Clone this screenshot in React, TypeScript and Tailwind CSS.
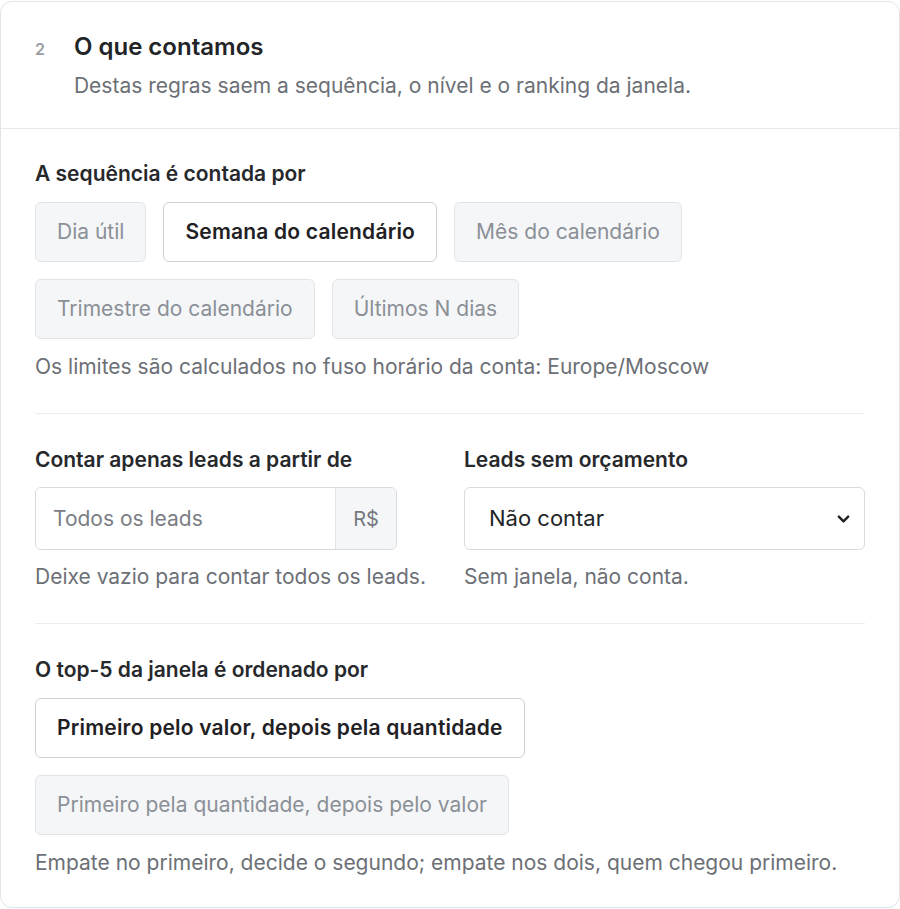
import { useState } from "react";

type Option = { id: string; label: string };

const periodOptions: Option[] = [
  { id: "workday", label: "Dia útil" },
  { id: "week", label: "Semana do calendário" },
  { id: "month", label: "Mês do calendário" },
  { id: "quarter", label: "Trimestre do calendário" },
  { id: "lastN", label: "Últimos N dias" },
];

const rankingOptions: Option[] = [
  { id: "value", label: "Primeiro pelo valor, depois pela quantidade" },
  { id: "count", label: "Primeiro pela quantidade, depois pelo valor" },
];

function Choice({ label, active, onClick }: { label: string; active: boolean; onClick: () => void }) {
  return (
    <button
      type="button"
      onClick={onClick}
      className={
        active
          ? "h-[60px] rounded-md border border-[#cfd3d8] bg-white px-[21px] text-[21px] font-semibold tracking-[0.2px] text-[#1f2124]"
          : "h-[60px] rounded-md border border-[#e1e4e8] bg-[#f5f6f8] px-[21px] text-[21px] text-[#8b9097]"
      }
    >
      {label}
    </button>
  );
}

function Label({ children }: { children: React.ReactNode }) {
  return <div className="text-[21px] leading-[26px] font-semibold text-[#26282b]">{children}</div>;
}

function Hint({ children }: { children: React.ReactNode }) {
  return <p className="text-[21px] leading-[28px] text-[#6c7076]">{children}</p>;
}

export default function App() {
  const [period, setPeriod] = useState("week");
  const [ranking, setRanking] = useState("value");

  return (
    <div className="min-h-screen bg-white pt-px font-['Inter',sans-serif]">
      <section className="rounded-xl border border-[#e2e4e7] bg-white">
        <header className="flex gap-[29px] border-b border-[#e8eaed] px-[34px] pt-[29px] pb-[28px]">
          <span className="pt-[8px] text-[16px] font-semibold leading-[20px] text-[#9a9ea4]">2</span>
          <div className="flex flex-col gap-[9px]">
            <h2 className="text-[24px] leading-[32px] font-semibold text-[#222427]">O que contamos</h2>
            <p className="text-[21px] leading-[28px] text-[#6c7076]">
              Destas regras saem a sequência, o nível e o ranking da janela.
            </p>
          </div>
        </header>

        <div className="px-[34px] pt-[32px] pb-[30px]">
          <Label>A sequência é contada por</Label>
          <div className="mt-[15px] flex max-w-[700px] flex-wrap gap-[17px]">
            {periodOptions.map((o) => (
              <Choice key={o.id} label={o.label} active={period === o.id} onClick={() => setPeriod(o.id)} />
            ))}
          </div>
          <div className="mt-[14px]">
            <Hint>Os limites são calculados no fuso horário da conta: Europe/Moscow</Hint>
          </div>

          <div className="mt-[32px] mb-[33px] border-t border-[#ebedf0]" />

          <div className="grid grid-cols-2 gap-[28px]">
            <div>
              <Label>Contar apenas leads a partir de</Label>
              <div className="mt-[14px] flex h-[63px] w-[362px] overflow-hidden rounded-md border border-[#d7dade]">
                <input
                  placeholder="Todos os leads"
                  className="min-w-0 flex-1 bg-white px-[17px] text-[21px] text-[#222] outline-none placeholder:text-[#7a7e84]"
                />
                <span className="flex w-[61px] items-center justify-center border-l border-[#e1e4e8] bg-[#f5f6f8] text-[20px] text-[#75797f]">
                  R$
                </span>
              </div>
              <div className="mt-[13px]">
                <Hint>Deixe vazio para contar todos os leads.</Hint>
              </div>
            </div>
            <div>
              <Label>Leads sem orçamento</Label>
              <div className="relative mt-[14px] h-[63px]">
                <select className="h-full w-full appearance-none rounded-md border border-[#d7dade] bg-white pl-[24px] text-[22px] text-[#222427] outline-none">
                  <option>Não contar</option>
                  <option>Contar</option>
                </select>
                <svg
                  className="pointer-events-none absolute top-1/2 right-[14px] -translate-y-1/2"
                  width="15"
                  height="15"
                  viewBox="0 0 16 16"
                  fill="none"
                  stroke="#222"
                  strokeWidth="2.6"
                  strokeLinecap="round"
                  strokeLinejoin="round"
                >
                  <path d="M3 5.5l5 5 5-5" />
                </svg>
              </div>
              <div className="mt-[13px]">
                <Hint>Sem janela, não conta.</Hint>
              </div>
            </div>
          </div>

          <div className="mt-[32px] mb-[33px] border-t border-[#ebedf0]" />

          <Label>O top-5 da janela é ordenado por</Label>
          <div className="mt-[15px] flex flex-col items-start gap-[17px]">
            {rankingOptions.map((o) => (
              <Choice key={o.id} label={o.label} active={ranking === o.id} onClick={() => setRanking(o.id)} />
            ))}
          </div>
          <div className="mt-[14px]">
            <Hint>Empate no primeiro, decide o segundo; empate nos dois, quem chegou primeiro.</Hint>
          </div>
        </div>
      </section>
    </div>
  );
}
